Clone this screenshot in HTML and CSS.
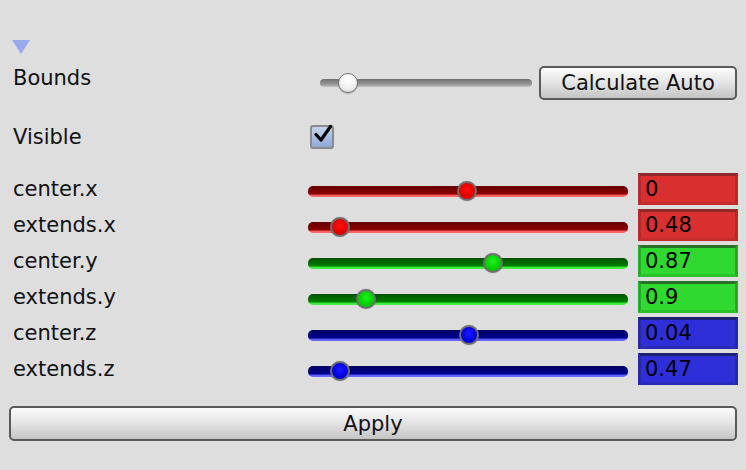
FILE: index.html
```html
<!DOCTYPE html>
<html>
<head>
<meta charset="utf-8">
<link rel="stylesheet" href="styles.css">
</head>
<body>
<div class="panel">
  <div class="foldout"></div>
  <div class="row bounds-row">
    <div class="label">Bounds</div>
    <div class="gray-slider">
      <div class="gray-knob" style="left: 13.2%"></div>
    </div>
    <button class="btn calc">Calculate Auto</button>
  </div>
  <div class="row visible-row">
    <div class="label">Visible</div>
    <div class="checkbox">
      <svg width="20" height="20" viewBox="0 0 20 20"><path d="M3 10.5 L8 16 L17.5 2.5" fill="none" stroke="#000" stroke-width="3.2" stroke-linecap="round" stroke-linejoin="round"/></svg>
    </div>
  </div>
  <div class="rows">
    <div class="row vrow red">
      <div class="label">center.x</div>
      <div class="track"><div class="knob" style="left: 49.7%"></div></div>
      <div class="field">0</div>
    </div>
    <div class="row vrow red">
      <div class="label">extends.x</div>
      <div class="track"><div class="knob" style="left: 10%"></div></div>
      <div class="field">0.48</div>
    </div>
    <div class="row vrow green">
      <div class="label">center.y</div>
      <div class="track"><div class="knob" style="left: 57.8%"></div></div>
      <div class="field">0.87</div>
    </div>
    <div class="row vrow green">
      <div class="label">extends.y</div>
      <div class="track"><div class="knob" style="left: 18.1%"></div></div>
      <div class="field">0.9</div>
    </div>
    <div class="row vrow blue">
      <div class="label">center.z</div>
      <div class="track"><div class="knob" style="left: 50.3%"></div></div>
      <div class="field">0.04</div>
    </div>
    <div class="row vrow blue">
      <div class="label">extends.z</div>
      <div class="track"><div class="knob" style="left: 10%"></div></div>
      <div class="field">0.47</div>
    </div>
  </div>
  <button class="btn apply">Apply</button>
</div>
</body>
</html>
```

FILE: styles.css
```css
* { box-sizing: border-box; }
html, body {
  margin: 0;
  padding: 0;
  background: #dedede;
  width: 746px;
  height: 470px;
  overflow: hidden;
  font-family: "DejaVu Sans", "Liberation Sans", sans-serif;
  font-size: 21px;
  color: #111;
}
.panel {
  padding: 40px 9px 0 9px;
  display: flex;
  flex-direction: column;
}
.foldout {
  width: 0;
  height: 0;
  margin-left: 3px;
  border-left: 9px solid transparent;
  border-right: 9px solid transparent;
  border-top: 14px solid #9aa9ec;
}
.row {
  display: flex;
  align-items: center;
}
.label {
  width: 299px;
  padding-left: 4px;
  flex: none;
}
.bounds-row {
  margin-top: 12px;
  height: 34px;
}
.bounds-row .label {
  align-self: flex-start;
  padding-top: 0;
}
.gray-slider {
  position: relative;
  margin-left: 12px;
  width: 212px;
  height: 8px;
  border-radius: 4px;
  background: linear-gradient(#6e6e6e, #9a9a9a 70%, #c4c4c4);
  flex: none;
}
.gray-knob {
  position: absolute;
  top: 50%;
  width: 20px;
  height: 20px;
  margin: -10px 0 0 -10px;
  border-radius: 50%;
  border: 1.5px solid #777;
  background: radial-gradient(circle at 50% 35%, #ffffff, #f2f2f2 50%, #cfcfcf);
  box-shadow: 0 1px 1px rgba(0,0,0,0.25);
}
.btn {
  font-family: "DejaVu Sans", "Liberation Sans", sans-serif;
  font-size: 21px;
  color: #111;
  border: 2px solid #5a5a5a;
  border-radius: 5px;
  background: linear-gradient(#fbfbfb, #e6e6e6 45%, #c4c4c4);
  padding: 0;
}
.calc {
  margin-left: 7px;
  width: 198px;
  height: 34px;
}
.visible-row {
  margin-top: 19px;
  height: 36px;
}
.checkbox {
  margin-left: 2px;
  width: 24px;
  height: 24px;
  border: 2px solid #8a8a8a;
  border-radius: 3px;
  background: linear-gradient(#c4d2ee, #8fa8d8);
  display: flex;
  align-items: flex-start;
  justify-content: center;
  overflow: visible;
}
.checkbox svg {
  margin-top: -3px;
  margin-left: 2px;
  flex: none;
}
.rows {
  margin-top: 18px;
  display: flex;
  flex-direction: column;
  gap: 4px;
}
.vrow {
  height: 32px;
}
.track {
  position: relative;
  width: 320px;
  height: 11px;
  margin-top: 4px;
  border-radius: 5px;
  flex: none;
}
.knob {
  position: absolute;
  top: 5px;
  width: 20px;
  height: 20px;
  margin: -10px 0 0 -10px;
  border-radius: 50%;
  border: 2px solid #6f6f6f;
  box-shadow: 0 0 1px rgba(0,0,0,0.5);
}
.field {
  margin-left: 10px;
  width: 100px;
  height: 32px;
  border: 3px solid;
  padding-left: 4px;
  line-height: 26px;
  font-size: 21px;
  color: #000;
  flex: none;
}
.red .track { background: linear-gradient(#650000, #8c0000 75%, #ff5a5a 80%, #ff6a6a); }
.red .knob { background: radial-gradient(circle at 50% 40%, #ff1010, #e00000 60%, #c00000); }
.red .field { background: #da2f2f; border-color: #8f2a2a #b52a2a #c42b2b #b52a2a; }
.green .track { background: linear-gradient(#005200, #008000 75%, #33ee33 80%, #44f044); }
.green .knob { background: radial-gradient(circle at 50% 40%, #20f020, #00d000 60%, #00b000); }
.green .field { background: #2fd92f; border-color: #2a6f2a #2aaa2a #2ac02a #2aaa2a; }
.blue .track { background: linear-gradient(#000060, #000090 75%, #5a5aff 80%, #6a6aff); }
.blue .knob { background: radial-gradient(circle at 50% 40%, #1a1aff, #0000e0 60%, #0000c0); }
.blue .field { background: #2f2fda; border-color: #202070 #2a2aa0 #2a2ab8 #2a2aa0; }
.apply {
  margin-top: 21px;
  width: 728px;
  height: 35px;
}
```
